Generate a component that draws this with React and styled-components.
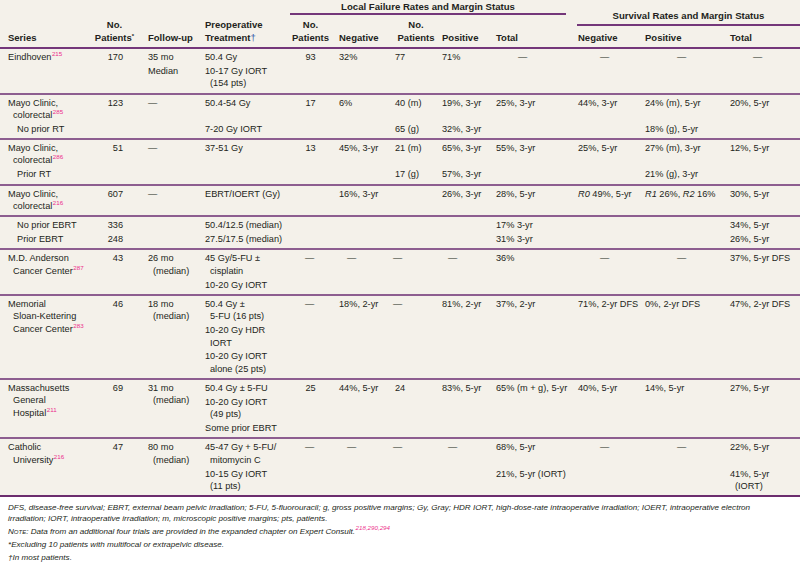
import React from "react";
import styled, { createGlobalStyle } from "styled-components";

const COLS = "92px 51px 57px 87px 47px 56px 47px 54px 82px 67px 85px 75px";
const D = "—";

const Global = createGlobalStyle`
  html, body { margin: 0; padding: 0; background: #ffffff; }
  body { font-family: "Liberation Sans", Arial, sans-serif; color: #231f20; }
`;

const Page = styled.div`
  width: 800px;
`;

const Table = styled.div`
  background: #f4f1ea;
  border-bottom: 2px solid #6c2d6e;
`;

const Head = styled.div`
  display: grid;
  grid-template-columns: ${COLS};
  grid-template-rows: 15px 11px 21px;
  border-bottom: 2px solid #74377a;
  font-weight: bold;
  font-size: 9.5px;
  line-height: 12.3px;
`;

const HeadCell = styled.div`
  grid-column: ${(p) => p.$col};
  grid-row: ${(p) => p.$row || "1 / 4"};
  align-self: end;
  padding: 0 ${(p) => p.$pr ?? 0}px 3px ${(p) => p.$pl ?? 5}px;
  text-align: ${(p) => (p.$center ? "center" : "left")};
  white-space: nowrap;
`;

const GroupTitle = styled.div`
  grid-column: ${(p) => p.$col};
  grid-row: ${(p) => p.$row};
  align-self: ${(p) => p.$align};
  margin: ${(p) => p.$margin};
  padding: ${(p) => p.$pad};
  font-size: 9.6px;
  line-height: 12px;
  text-align: center;
  white-space: nowrap;
  border-bottom: 2px solid #74377a;
`;

const Star = styled.span`
  font-size: 6px;
  vertical-align: 3px;
  line-height: 0;
`;

const Dagger = styled.span`
  color: #3558a8;
  font-weight: normal;
`;

const Group = styled.div`
  display: grid;
  grid-template-columns: ${COLS};
  row-gap: 1.5px;
  padding: 2px 0 3px;
  & + & { border-top: 2px solid #8d5e90; }
`;

const Cell = styled.div`
  display: flex;
  flex-direction: column;
  gap: 1.5px;
  padding-left: ${(p) => p.$pl || 0}px;
  padding-right: ${(p) => p.$pr || 0}px;
  text-align: ${(p) => p.$align || "left"};
  font-size: 9.2px;
  line-height: 12.35px;
  white-space: nowrap;
`;

const Item = styled.div``;

const Line = styled.div`
  & + & { padding-left: 5px; }
`;

const Ref = styled.sup`
  color: #ec2f8c;
  font-size: 6.2px;
  line-height: 0;
  vertical-align: 4px;
  margin-left: 0.5px;
`;

const Notes = styled.div`
  padding: 6px 8px 0;
  font-style: italic;
  font-size: 8.1px;
  line-height: 10.3px;
`;

const Note = styled.p`
  margin: 0 0 2.7px;
  white-space: nowrap;
`;

const SmallCaps = styled.span`
  font-variant: small-caps;
`;

const sup = (n) => <Ref>{n}</Ref>;

const columns = [
  { key: "series", pl: 8 },
  { key: "n", align: "right", pr: 20, dash: 5 },
  { key: "fu", pl: 5, dash: 5 },
  { key: "pre", pl: 5 },
  { key: "lnp", align: "center", dash: 18 },
  { key: "neg", pl: 5, dash: 13 },
  { key: "np2", pl: 5, dash: 3 },
  { key: "pos", pl: 5, dash: 11 },
  { key: "tot", pl: 5, dash: 27 },
  { key: "sneg", pl: 5, dash: 27 },
  { key: "spos", pl: 5, dash: 37 },
  { key: "stot", pl: 5, dash: 28 },
];

const groups = [
  [
    {
      series: <>Eindhoven{sup(215)}</>,
      n: "170", fu: ["35 mo", "Median"], pre: ["50.4 Gy", "10-17 Gy IORT\n(154 pts)"],
      lnp: "93", neg: "32%", np2: "77", pos: "71%", tot: D, sneg: D, spos: D, stot: D,
    },
  ],
  [
    {
      series: [["Mayo Clinic,", <>colorectal{sup(285)}</>]],
      n: "123", fu: D, pre: "50.4-54 Gy", lnp: "17", neg: "6%", np2: "40 (m)",
      pos: "19%, 3-yr", tot: "25%, 3-yr", sneg: "44%, 3-yr", spos: "24% (m), 5-yr", stot: "20%, 5-yr",
    },
    { sub: true, series: "No prior RT", pre: "7-20 Gy IORT", np2: "65 (g)", pos: "32%, 3-yr", spos: "18% (g), 5-yr" },
  ],
  [
    {
      series: [["Mayo Clinic,", <>colorectal{sup(286)}</>]],
      n: "51", fu: D, pre: "37-51 Gy", lnp: "13", neg: "45%, 3-yr", np2: "21 (m)",
      pos: "65%, 3-yr", tot: "55%, 3-yr", sneg: "25%, 5-yr", spos: "27% (m), 3-yr", stot: "12%, 5-yr",
    },
    { sub: true, series: "Prior RT", np2: "17 (g)", pos: "57%, 3-yr", spos: "21% (g), 3-yr" },
  ],
  [
    {
      series: [["Mayo Clinic,", <>colorectal{sup(216)}</>]],
      n: "607", fu: D, pre: "EBRT/IOERT (Gy)", neg: "16%, 3-yr", pos: "26%, 3-yr", tot: "28%, 5-yr",
      sneg: <><i>R0</i> 49%, 5-yr</>, spos: <><i>R1</i> 26%, <i>R2</i> 16%</>, stot: "30%, 5-yr",
    },
  ],
  [
    { sub: true, series: "No prior EBRT", n: "336", pre: "50.4/12.5 (median)", tot: "17% 3-yr", stot: "34%, 5-yr" },
    { sub: true, series: "Prior EBRT", n: "248", pre: "27.5/17.5 (median)", tot: "31% 3-yr", stot: "26%, 5-yr" },
  ],
  [
    {
      series: [["M.D. Anderson", <>Cancer Center{sup(287)}</>]],
      n: "43", fu: "26 mo\n(median)", pre: ["45 Gy/5-FU ±\ncisplatin", "10-20 Gy IORT"],
      lnp: D, neg: D, np2: D, pos: D, tot: "36%", sneg: D, spos: D, stot: "37%, 5-yr DFS",
    },
  ],
  [
    {
      series: [["Memorial", "Sloan-Kettering", <>Cancer Center{sup(283)}</>]],
      n: "46", fu: "18 mo\n(median)",
      pre: ["50.4 Gy ±\n5-FU (16 pts)", "10-20 Gy HDR\nIORT", "10-20 Gy IORT\nalone (25 pts)"],
      lnp: D, neg: "18%, 2-yr", np2: D, pos: "81%, 2-yr", tot: "37%, 2-yr",
      sneg: "71%, 2-yr DFS", spos: "0%, 2-yr DFS", stot: "47%, 2-yr DFS",
    },
  ],
  [
    {
      series: [["Massachusetts", "General", <>Hospital{sup(211)}</>]],
      n: "69", fu: "31 mo\n(median)",
      pre: ["50.4 Gy ± 5-FU", "10-20 Gy IORT\n(49 pts)", "Some prior EBRT"],
      lnp: "25", neg: "44%, 5-yr", np2: "24", pos: "83%, 5-yr", tot: "65% (m + g), 5-yr",
      sneg: "40%, 5-yr", spos: "14%, 5-yr", stot: "27%, 5-yr",
    },
  ],
  [
    {
      series: [["Catholic", <>University{sup(216)}</>]],
      n: "47", fu: "80 mo\n(median)", pre: "45-47 Gy + 5-FU/\nmitomycin C",
      lnp: D, neg: D, np2: D, pos: D, tot: "68%, 5-yr", sneg: D, spos: D, stot: "22%, 5-yr",
    },
    { pre: "10-15 Gy IORT\n(11 pts)", tot: "21%, 5-yr (IORT)", stot: "41%, 5-yr\n(IORT)" },
  ],
];

function toItems(value) {
  if (value === undefined || value === null) return [];
  const items = Array.isArray(value) ? value : [value];
  return items.map((it) => (typeof it === "string" ? it.split("\n") : Array.isArray(it) ? it : [it]));
}

function DataRow({ row, idx }) {
  return columns.map((col) => {
    const value = row[col.key];
    const isDash = value === D;
    const pl = isDash ? col.dash : col.key === "series" && row.sub ? 17 : col.pl;
    return (
      <Cell
        key={`${idx}-${col.key}`}
        $pl={pl}
        $pr={isDash ? 0 : col.pr}
        $align={isDash ? "left" : col.align}
      >
        {toItems(value).map((lines, i) => (
          <Item key={i}>
            {lines.map((ln, j) => (
              <Line key={j}>{ln}</Line>
            ))}
          </Item>
        ))}
      </Cell>
    );
  });
}

export default function App() {
  return (
    <Page>
      <Global />
      <Table>
        <Head>
          <HeadCell $col="1" $pl={8}>Series</HeadCell>
          <HeadCell $col="2" $center $pl={0} $pr={6}>
            No.<br />Patients<Star>*</Star>
          </HeadCell>
          <HeadCell $col="3">Follow-up</HeadCell>
          <HeadCell $col="4">
            Preoperative<br />Treatment<Dagger>†</Dagger>
          </HeadCell>
          <GroupTitle $col="5 / 10" $row="1" $align="start" $margin="0 7px 0 3px" $pad="1px 0 0">
            Local Failure Rates and Margin Status
          </GroupTitle>
          <GroupTitle $col="10 / 13" $row="1 / 3" $align="end" $margin="0 0 0 4px" $pad="0 0 2px">
            Survival Rates and Margin Status
          </GroupTitle>
          <HeadCell $col="5" $row="2 / 4" $center $pl={0}>No.<br />Patients</HeadCell>
          <HeadCell $col="6" $row="2 / 4">Negative</HeadCell>
          <HeadCell $col="7" $row="2 / 4" $center>No.<br />Patients</HeadCell>
          <HeadCell $col="8" $row="2 / 4">Positive</HeadCell>
          <HeadCell $col="9" $row="2 / 4">Total</HeadCell>
          <HeadCell $col="10" $row="3">Negative</HeadCell>
          <HeadCell $col="11" $row="3">Positive</HeadCell>
          <HeadCell $col="12" $row="3">Total</HeadCell>
        </Head>
        {groups.map((rows, g) => (
          <Group key={g}>
            {rows.map((row, r) => (
              <DataRow key={r} row={row} idx={r} />
            ))}
          </Group>
        ))}
      </Table>
      <Notes>
        <Note>
          DFS, disease-free survival; EBRT, external beam pelvic irradiation; 5-FU, 5-fluorouracil; g, gross positive margins; Gy, Gray; HDR IORT, high-dose-rate intraoperative irradiation; IOERT, intraoperative electron
          <br />
          irradiation; IORT, intraoperative irradiation; m, microscopic positive margins; pts, patients.
        </Note>
        <Note>
          <SmallCaps>Note</SmallCaps>: Data from an additional four trials are provided in the expanded chapter on Expert Consult.{sup("218,290,294")}
        </Note>
        <Note>*Excluding 10 patients with multifocal or extrapelvic disease.</Note>
        <Note>†In most patients.</Note>
      </Notes>
    </Page>
  );
}
